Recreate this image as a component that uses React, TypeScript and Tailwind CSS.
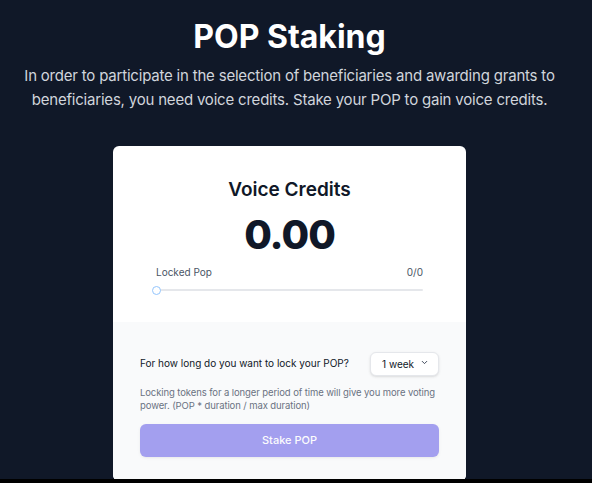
import React, { useState } from 'react';
import { ChevronDown } from 'lucide-react';

const durations = ['1 week', '1 month', '3 months', '6 months', '1 year', '4 years'];

export default function App() {
  const [duration, setDuration] = useState('1 week');
  const [locked] = useState(0);
  const [credits] = useState(0);

  return (
    <div
      className="h-[483px] flex flex-col bg-black overflow-hidden"
      style={{ fontFamily: 'Inter, "Noto Sans", sans-serif' }}
    >
      <div className="flex-1 bg-gray-900 overflow-hidden">
        <div className="w-[579px] flex flex-col items-center">
          {/* Header */}
          <h1 className="mt-[17px] text-[32px] leading-[40px] font-bold text-white">
            POP Staking
          </h1>
          <p className="mt-[7px] w-[545px] text-center text-[15px] leading-6 text-gray-300 tracking-[-0.2px]">
            In order to participate in the selection of beneficiaries and awarding grants to
            beneficiaries, you need voice credits. Stake your POP to gain voice credits.
          </p>

          {/* Card */}
          <div className="mt-[34px] w-[353px] bg-white rounded-md overflow-hidden">
            <div className="px-[43px] pt-[30px] pb-[27px] flex flex-col items-center">
              <h3 className="text-[19px] leading-7 font-semibold text-gray-900">Voice Credits</h3>
              <p className="mt-[7px] text-[40px] leading-[48px] font-extrabold text-gray-900 tracking-tight">
                {credits.toFixed(2)}
              </p>
              <div className="mt-[6px] w-full flex justify-between text-[10px] leading-[14px] text-gray-600">
                <span>Locked Pop</span>
                <span>{locked}/0</span>
              </div>
              <div className="mt-[6px] w-full h-[10px] flex items-center relative">
                <div className="w-full h-[2px] rounded-full bg-gray-200" />
                <div className="absolute left-[-4px] w-[9px] h-[9px] rounded-full bg-white border-[1.5px] border-[#93c5fd]" />
              </div>
            </div>

            <div className="bg-gray-50 px-[27px] pt-[29px] pb-[24px]">
              <div className="flex items-center justify-between h-[24px]">
                <span className="text-[10px] text-gray-900">For how long do you want to lock your POP?</span>
                <div className="relative">
                  <select
                    value={duration}
                    onChange={(e) => setDuration(e.target.value)}
                    className="appearance-none w-[69px] h-[24px] pl-[11px] pr-5 bg-white border border-gray-200 rounded-md text-[10px] text-gray-900 shadow-sm"
                  >
                    {durations.map((d) => (
                      <option key={d} value={d}>{d}</option>
                    ))}
                  </select>
                  <ChevronDown className="w-[9px] h-[9px] absolute right-[10px] top-[8px] text-gray-700 pointer-events-none" strokeWidth={2.5} />
                </div>
              </div>
              <p className="mt-[12px] text-[9.5px] leading-[12.5px] text-gray-500 tracking-[-0.1px]">
                Locking tokens for a longer period of time will give you more voting power. (POP * duration / max duration)
              </p>
              <button
                disabled
                className="mt-[12px] w-full h-[33px] rounded-md bg-[#4f46e5] text-white text-[11px] font-medium shadow-sm disabled:opacity-50"
              >
                Stake POP
              </button>
            </div>
          </div>
        </div>
      </div>
      <div className="h-[4px] bg-black" />
    </div>
  );
}
